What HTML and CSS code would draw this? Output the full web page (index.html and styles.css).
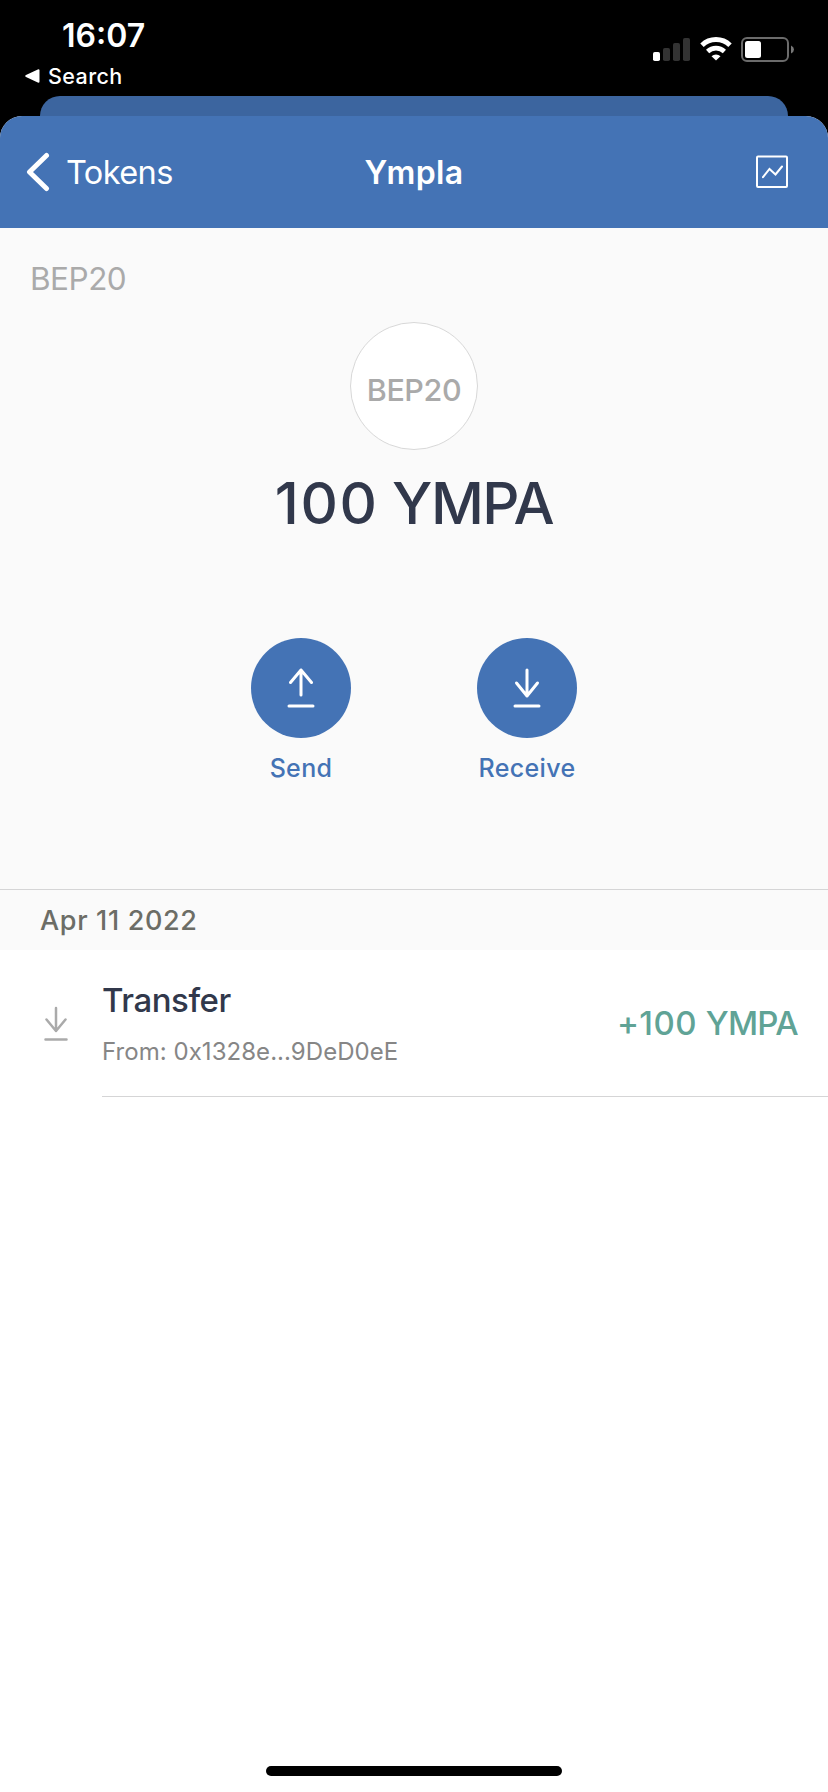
FILE: index.html
```html
<!DOCTYPE html>
<html lang="en">
<head>
    <meta charset="UTF-8">
    <meta name="viewport" content="width=device-width, initial-scale=1.0">
    <title>Ympla</title>
    <link rel="stylesheet" href="styles.css">
</head>
<body>
    <div class="status-bar">
        <div class="status-left">
            <div class="time">16:07</div>
            <div class="back-app">
                <svg width="15" height="14" viewBox="0 0 15 14" fill="#fff">
                    <path d="M1 6 12.8.4Q14.5 0 14.5 1.6V12.4Q14.5 14 12.8 13.6L1 8Q-.6 7 1 6z"/>
                </svg>
                <span>Search</span>
            </div>
        </div>
        <div class="status-icons">
            <svg width="37" height="24" viewBox="0 0 37 24">
                <rect x="0" y="15" width="7" height="9" rx="1.8" fill="#fff"/>
                <rect x="10" y="11" width="7" height="13" rx="1.8" fill="#333"/>
                <rect x="20" y="6" width="7" height="18" rx="1.8" fill="#333"/>
                <rect x="30" y="1" width="7" height="23" rx="1.8" fill="#333"/>
            </svg>
            <svg width="32" height="24" viewBox="0 0 32 24" fill="none" stroke="#fff">
                <path d="M2 8.2a20.3 20.3 0 0 1 28 0" stroke-width="5"/>
                <path d="M7.6 14.5a12.2 12.2 0 0 1 16.8 0" stroke-width="4.6"/>
                <path d="M16 23.6 11.5 19.2a6.6 6.6 0 0 1 9 0z" fill="#fff" stroke="none"/>
            </svg>
            <svg width="53" height="25" viewBox="0 0 53 25">
                <rect x="1" y="1" width="46" height="23" rx="5" fill="none" stroke="#6b6b6b" stroke-width="2"/>
                <rect x="4" y="4" width="16" height="17" rx="2.5" fill="#fff"/>
                <path d="M50 8.500Q53 10 53 12.500T50 16.500z" fill="#777"/>
            </svg>
        </div>
    </div>

    <div class="sheet-behind"></div>

    <div class="sheet">
        <header class="nav-bar">
            <div class="nav-back">
                <svg width="24" height="40" viewBox="0 0 24 40" fill="none" stroke="#fff" stroke-width="5" stroke-linecap="round" stroke-linejoin="round">
                    <path d="M20.500 3.500 3.500 20l17 16.500"/>
                </svg>
                <span>Tokens</span>
            </div>
            <h1 class="nav-title">Ympla</h1>
            <svg class="nav-chart" width="32" height="33" viewBox="0 0 32 33" fill="none" stroke="#fff" stroke-width="2">
                <rect x="1" y="1.500" width="30" height="30.500" rx="1"/>
                <path d="M7 22.200 13.500 14 19.500 19.500 26 11.500" stroke-linecap="round"/>
            </svg>
        </header>

        <section class="token">
            <div class="token-type">BEP20</div>
            <div class="token-logo">BEP20</div>
            <div class="token-balance"><span class="number">100</span> <span class="symbol">YMPA</span></div>
            <div class="actions">
                <div class="action">
                    <div class="action-icon">
                        <svg width="28" height="40" viewBox="0 0 28 40" fill="none" stroke="#fff" stroke-width="3" stroke-linecap="round" stroke-linejoin="round">
                            <path d="M14 27V2M3.500 14.500 14 2l10.500 12.500M2 38h24"/>
                        </svg>
                    </div>
                    <span>Send</span>
                </div>
                <div class="action">
                    <div class="action-icon">
                        <svg width="28" height="40" viewBox="0 0 28 40" fill="none" stroke="#fff" stroke-width="3" stroke-linecap="round" stroke-linejoin="round">
                            <path d="M14 2v26M3.500 15 14 28l10.500-13M2 38h24"/>
                        </svg>
                    </div>
                    <span>Receive</span>
                </div>
            </div>
        </section>

        <section class="history">
            <div class="history-date">Apr 11 2022</div>
            <div class="tx">
                <svg class="tx-icon" width="24" height="36" viewBox="0 0 24 36" fill="none" stroke="#aaa" stroke-width="2.500" stroke-linecap="round" stroke-linejoin="round">
                    <path d="M12 2v23M2.500 13.500 12 25l9.500-11.500M1.500 33.500h21"/>
                </svg>
                <div class="tx-body">
                    <div class="tx-info">
                        <div class="tx-title">Transfer</div>
                        <div class="tx-from">From: 0x1328e...9DeD0eE</div>
                    </div>
                    <div class="tx-amount"><span class="number">+100</span> <span class="symbol">YMPA</span></div>
                </div>
            </div>
        </section>

        <div class="home-indicator"></div>
    </div>
</body>
</html>
```
FILE: styles.css
```css
:root {
    --blue: #4473b5;
    --blue-dim: #3c659f;
    --panel: #fafafa;
    --line: #d5d5d6;
    --text: #31384b;
    --grey: #aaa;
    --green: #60a396;
}

* {
    margin: 0;
    padding: 0;
    box-sizing: border-box;
}

body {
    font-family: Inter, "Liberation Sans", sans-serif;
    background: #000;
    color: var(--text);
    height: 1792px;
    display: flex;
    flex-direction: column;
    overflow: hidden;
}

svg {
    display: block;
    flex: none;
}

.status-bar {
    height: 96px;
    padding: 15px 34px 0 25px;
    display: flex;
    justify-content: space-between;
    color: #fff;
}

.time {
    padding-left: 37px;
    font-size: 32px;
    font-weight: 600;
    line-height: 42px;
}

.back-app {
    display: flex;
    align-items: center;
    gap: 8px;
    height: 38px;
    font-size: 21.5px;
    font-weight: 500;
    letter-spacing: 0.4px;
}

.status-icons {
    display: flex;
    align-items: flex-start;
    gap: 9.5px;
    padding-top: 22px;
}

.sheet-behind {
    height: 20px;
    margin: 0 40px;
    background: var(--blue-dim);
    border-radius: 20px 20px 0 0;
}

.sheet {
    flex: 1;
    display: flex;
    flex-direction: column;
    background: #fff;
    border-radius: 22px 22px 0 0;
    overflow: hidden;
}

.nav-bar {
    height: 112px;
    padding: 0 26px;
    display: grid;
    grid-template-columns: 1fr auto 1fr;
    align-items: center;
    background: var(--blue);
    color: #fff;
}

.nav-back {
    display: flex;
    align-items: center;
    gap: 16px;
    font-size: 32.5px;
    letter-spacing: -0.6px;
}

.nav-title {
    font-size: 32px;
    font-weight: 600;
    letter-spacing: 0.4px;
}

.nav-chart {
    justify-self: end;
    margin: 0 14px 1px 0;
}

.token {
    height: 662px;
    padding-top: 30px;
    display: flex;
    flex-direction: column;
    align-items: center;
    background: var(--panel);
    border-bottom: 1px solid var(--line);
}

.token-type {
    align-self: flex-start;
    padding-left: 30px;
    font-size: 31.5px;
    line-height: 41px;
    letter-spacing: -0.5px;
    color: var(--grey);
}

.token-logo {
    width: 128px;
    height: 128px;
    margin-top: 23px;
    padding-top: 6px;
    display: flex;
    align-items: center;
    justify-content: center;
    background: #fff;
    border: 1px solid #d8d8d8;
    border-radius: 50%;
    color: var(--grey);
    font-size: 30.5px;
    font-weight: 500;
    letter-spacing: -0.4px;
}

.token-balance {
    margin-top: 18px;
    font-size: 58px;
    font-weight: 500;
    line-height: 70px;
    word-spacing: -2px;
}

.token-balance .number {
    letter-spacing: 1.6px;
}

.token-balance .symbol {
    letter-spacing: -1.5px;
}

.actions {
    display: flex;
    gap: 126px;
    margin-top: 100px;
}

.action {
    width: 100px;
    display: flex;
    flex-direction: column;
    align-items: center;
    color: var(--blue);
    font-size: 25px;
    font-weight: 500;
    line-height: 30px;
    letter-spacing: 0.35px;
}

.action-icon {
    width: 100px;
    height: 100px;
    margin-bottom: 15px;
    display: flex;
    align-items: center;
    justify-content: center;
    background: var(--blue);
    border-radius: 50%;
}

.history {
    flex: 1;
}

.history-date {
    height: 60px;
    padding-left: 40px;
    background: var(--panel);
    color: #6c6d66;
    font-size: 27px;
    font-weight: 500;
    line-height: 61px;
    letter-spacing: 0.65px;
}

.tx {
    height: 147px;
    display: flex;
    align-items: center;
    padding-left: 44px;
}

.tx-body {
    flex: 1;
    height: 147px;
    margin-left: 34px;
    padding-right: 30px;
    display: flex;
    align-items: center;
    justify-content: space-between;
    border-bottom: 1px solid var(--line);
}

.tx-title {
    font-size: 33px;
    font-weight: 500;
    line-height: 48px;
    letter-spacing: -0.45px;
}

.tx-from {
    padding-top: 10px;
    font-size: 24px;
    line-height: 36px;
    letter-spacing: 0.05px;
    color: #868686;
}

.tx-amount {
    font-size: 33px;
    font-weight: 500;
    color: var(--green);
}

.tx-amount .number {
    letter-spacing: 0.4px;
}

.tx-amount .symbol {
    letter-spacing: -0.7px;
}

.home-indicator {
    width: 296px;
    height: 10px;
    margin: 0 auto 16px;
    background: #000;
    border-radius: 5px;
}
```
